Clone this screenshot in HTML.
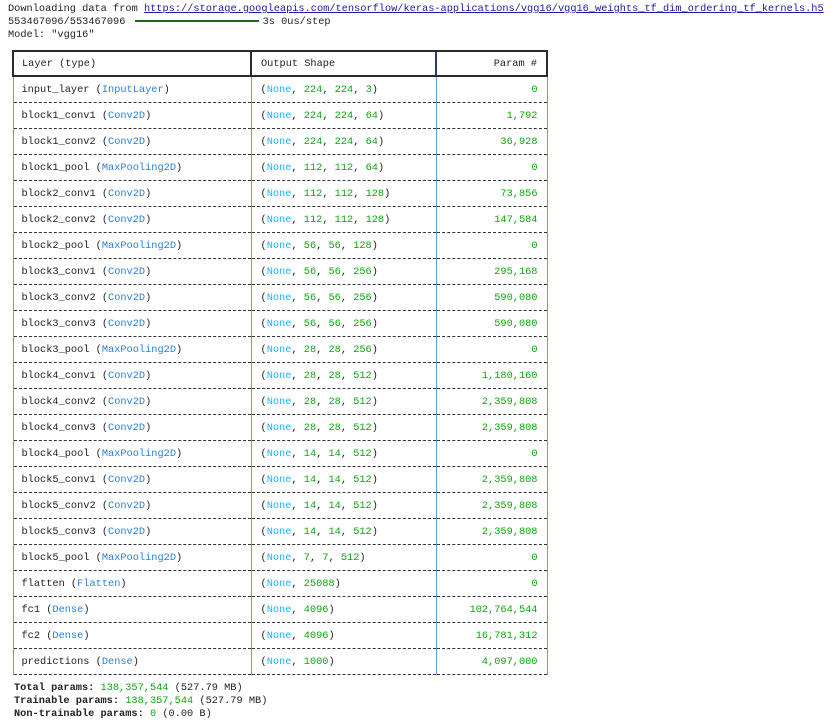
<!DOCTYPE html>
<html><head><meta charset="utf-8"><style>
body{margin:0;background:#fff;font-family:"Liberation Mono",monospace;font-size:10.3px;color:#222;}
.top{position:absolute;left:8px;top:3px;line-height:13px;white-space:pre;}
a{color:#1a1aa6;text-decoration:underline}
.bar{display:inline-block;width:124px;height:2px;background:#1a6e1a;vertical-align:middle;margin:0 4px 0 3px}
table{position:absolute;left:12px;top:50px;border-collapse:collapse;width:534px;table-layout:fixed}
td{height:25px;padding:0;white-space:pre;border-bottom:1px dashed #333;}
td.a{padding-left:8px;border-left:1px solid #c9893a}
td.b{padding-left:9px;border-left:1px solid #c9893a}
td.c{text-align:right;padding-right:9px;border-left:1px solid #5aa0e0;border-right:1px solid #c9893a}
tr.h td{border-top:2px solid #2a2a2a;border-bottom:2px solid #2a2a2a;border-left:2px solid #2a2a2a;height:23px}
tr.h td.c{border-right:2px solid #2a2a2a;border-left:2px solid #2a3a6a}
.n{color:#1ab4ff}.g{color:#0aa80a}.k{color:#2a7fd8}
.foot{position:absolute;left:14px;top:682px;line-height:13px;white-space:pre;}
</style></head><body>
<div class="top">Downloading data from <a>https://storage.googleapis.com/tensorflow/keras-applications/vgg16/vgg16_weights_tf_dim_ordering_tf_kernels.h5</a>
553467096/553467096 <span class="bar"></span>3s 0us/step
Model: "vgg16"</div>
<table>
<colgroup><col style="width:238px"><col style="width:185px"><col style="width:111px"></colgroup>
<tr class="h"><td class="a">Layer (type)</td><td class="b">Output Shape</td><td class="c">Param #</td></tr>
<tr><td class="a">input_layer (<span class="k">InputLayer</span>)</td><td class="b">(<span class="n">None</span>, <span class="g">224</span>, <span class="g">224</span>, <span class="g">3</span>)</td><td class="c g">0</td></tr>
<tr><td class="a">block1_conv1 (<span class="k">Conv2D</span>)</td><td class="b">(<span class="n">None</span>, <span class="g">224</span>, <span class="g">224</span>, <span class="g">64</span>)</td><td class="c g">1,792</td></tr>
<tr><td class="a">block1_conv2 (<span class="k">Conv2D</span>)</td><td class="b">(<span class="n">None</span>, <span class="g">224</span>, <span class="g">224</span>, <span class="g">64</span>)</td><td class="c g">36,928</td></tr>
<tr><td class="a">block1_pool (<span class="k">MaxPooling2D</span>)</td><td class="b">(<span class="n">None</span>, <span class="g">112</span>, <span class="g">112</span>, <span class="g">64</span>)</td><td class="c g">0</td></tr>
<tr><td class="a">block2_conv1 (<span class="k">Conv2D</span>)</td><td class="b">(<span class="n">None</span>, <span class="g">112</span>, <span class="g">112</span>, <span class="g">128</span>)</td><td class="c g">73,856</td></tr>
<tr><td class="a">block2_conv2 (<span class="k">Conv2D</span>)</td><td class="b">(<span class="n">None</span>, <span class="g">112</span>, <span class="g">112</span>, <span class="g">128</span>)</td><td class="c g">147,584</td></tr>
<tr><td class="a">block2_pool (<span class="k">MaxPooling2D</span>)</td><td class="b">(<span class="n">None</span>, <span class="g">56</span>, <span class="g">56</span>, <span class="g">128</span>)</td><td class="c g">0</td></tr>
<tr><td class="a">block3_conv1 (<span class="k">Conv2D</span>)</td><td class="b">(<span class="n">None</span>, <span class="g">56</span>, <span class="g">56</span>, <span class="g">256</span>)</td><td class="c g">295,168</td></tr>
<tr><td class="a">block3_conv2 (<span class="k">Conv2D</span>)</td><td class="b">(<span class="n">None</span>, <span class="g">56</span>, <span class="g">56</span>, <span class="g">256</span>)</td><td class="c g">590,080</td></tr>
<tr><td class="a">block3_conv3 (<span class="k">Conv2D</span>)</td><td class="b">(<span class="n">None</span>, <span class="g">56</span>, <span class="g">56</span>, <span class="g">256</span>)</td><td class="c g">590,080</td></tr>
<tr><td class="a">block3_pool (<span class="k">MaxPooling2D</span>)</td><td class="b">(<span class="n">None</span>, <span class="g">28</span>, <span class="g">28</span>, <span class="g">256</span>)</td><td class="c g">0</td></tr>
<tr><td class="a">block4_conv1 (<span class="k">Conv2D</span>)</td><td class="b">(<span class="n">None</span>, <span class="g">28</span>, <span class="g">28</span>, <span class="g">512</span>)</td><td class="c g">1,180,160</td></tr>
<tr><td class="a">block4_conv2 (<span class="k">Conv2D</span>)</td><td class="b">(<span class="n">None</span>, <span class="g">28</span>, <span class="g">28</span>, <span class="g">512</span>)</td><td class="c g">2,359,808</td></tr>
<tr><td class="a">block4_conv3 (<span class="k">Conv2D</span>)</td><td class="b">(<span class="n">None</span>, <span class="g">28</span>, <span class="g">28</span>, <span class="g">512</span>)</td><td class="c g">2,359,808</td></tr>
<tr><td class="a">block4_pool (<span class="k">MaxPooling2D</span>)</td><td class="b">(<span class="n">None</span>, <span class="g">14</span>, <span class="g">14</span>, <span class="g">512</span>)</td><td class="c g">0</td></tr>
<tr><td class="a">block5_conv1 (<span class="k">Conv2D</span>)</td><td class="b">(<span class="n">None</span>, <span class="g">14</span>, <span class="g">14</span>, <span class="g">512</span>)</td><td class="c g">2,359,808</td></tr>
<tr><td class="a">block5_conv2 (<span class="k">Conv2D</span>)</td><td class="b">(<span class="n">None</span>, <span class="g">14</span>, <span class="g">14</span>, <span class="g">512</span>)</td><td class="c g">2,359,808</td></tr>
<tr><td class="a">block5_conv3 (<span class="k">Conv2D</span>)</td><td class="b">(<span class="n">None</span>, <span class="g">14</span>, <span class="g">14</span>, <span class="g">512</span>)</td><td class="c g">2,359,808</td></tr>
<tr><td class="a">block5_pool (<span class="k">MaxPooling2D</span>)</td><td class="b">(<span class="n">None</span>, <span class="g">7</span>, <span class="g">7</span>, <span class="g">512</span>)</td><td class="c g">0</td></tr>
<tr><td class="a">flatten (<span class="k">Flatten</span>)</td><td class="b">(<span class="n">None</span>, <span class="g">25088</span>)</td><td class="c g">0</td></tr>
<tr><td class="a">fc1 (<span class="k">Dense</span>)</td><td class="b">(<span class="n">None</span>, <span class="g">4096</span>)</td><td class="c g">102,764,544</td></tr>
<tr><td class="a">fc2 (<span class="k">Dense</span>)</td><td class="b">(<span class="n">None</span>, <span class="g">4096</span>)</td><td class="c g">16,781,312</td></tr>
<tr><td class="a">predictions (<span class="k">Dense</span>)</td><td class="b">(<span class="n">None</span>, <span class="g">1000</span>)</td><td class="c g">4,097,000</td></tr>
</table>
<div class="foot"><b>Total params: </b><span class="g">138,357,544</span> (527.79 MB)
<b>Trainable params: </b><span class="g">138,357,544</span> (527.79 MB)
<b>Non-trainable params: </b><span class="g">0</span> (0.00 B)</div>
</body></html>
